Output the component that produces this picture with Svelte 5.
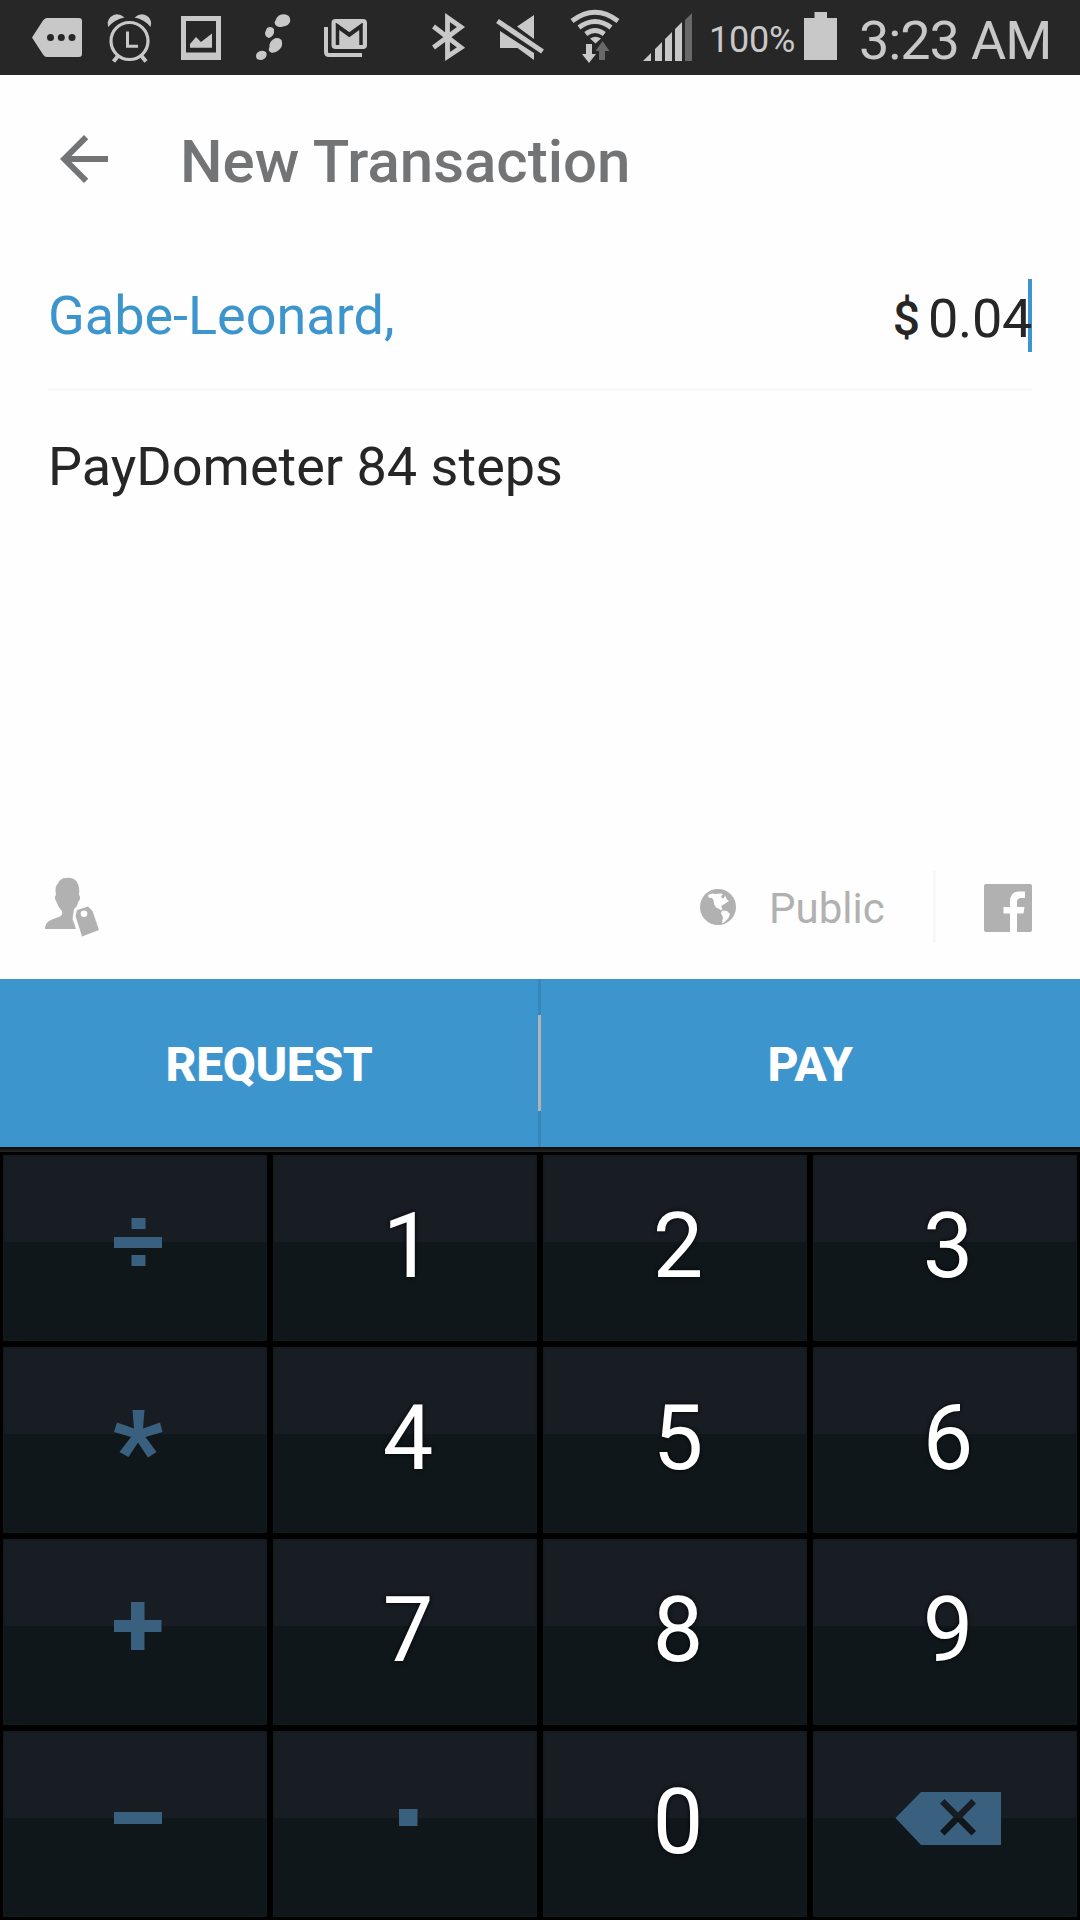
<script lang="ts">
	const recipient = 'Gabe-Leonard,';
	const note = 'PayDometer 84 steps';
	let amount = '0.04';

	const keys = ['÷', '1', '2', '3', '*', '4', '5', '6', '+', '7', '8', '9', '-', '.', '0', 'del'];
	const isDigit = (key: string) => key >= '0' && key <= '9';

	function press(key: string) {
		if (key === 'del') {
			amount = amount.slice(0, -1);
		} else if (isDigit(key) || (key === '.' && !amount.includes('.'))) {
			amount += key;
		}
	}
</script>

<div class="screen">
	<header class="status">
		<svg width="75" height="75" viewBox="20 0 75 75">
			<path d="M32 37.500L43 20.500Q44.500 18 47 18H79Q82 18 82 21V54Q82 57 79 57H47Q44.500 57 43 54.500Z" />
			<g class="hole"><circle cx="50.500" cy="37.500" r="3.500" /><circle cx="61.300" cy="37.500" r="3.500" /><circle cx="72" cy="37.500" r="3.500" /></g>
		</svg>
		<svg width="70" height="75" viewBox="95 0 70 75">
			<circle class="line" cx="129.500" cy="41" r="18.500" stroke-width="3.200" />
			<path class="line" d="M127.500 31.500V46.300H138" stroke-width="3" />
			<path class="line" d="M118 56L113.500 61.500M141.500 56L146 61.500" stroke-width="4" />
			<path d="M108.300 27Q106.500 21 110.500 17Q117 11.500 124.500 17.500Q114.500 19.500 108.300 27ZM150.500 27Q152.300 21 148.500 17Q142 11.500 134.500 17.500Q144.500 19.500 150.500 27Z" />
		</svg>
		<svg width="75" height="75" viewBox="165 0 75 75">
			<path fill-rule="evenodd" d="M181 16H221V60H181ZM186 21V52.500H216V21Z" />
			<path d="M190 44L196 37L201 42L212 33.500V47.700H190Z" />
		</svg>
		<svg width="70" height="75" viewBox="240 0 70 75">
			<path d="M280 15Q284 13.500 288 15.500Q291 18 290 22Q288 26 283 26.500Q279 28 276 25.500Q273.500 23 275.500 20.500Q277 16 280 15Z" />
			<path d="M267 28Q271 25.500 274 29V33Q272.500 37 269 38Q265 37 265 32.500Z" />
			<path d="M273 39.500Q278 36.500 281.500 40Q283.500 46 279 50Q275 53.500 271 52.500Q267.500 51 269.500 47Q269 42 273 39.500Z" />
			<path d="M257 53Q261 49 266 52Q268 56 264 59Q261 61 257 59Q255 56 257 53Z" />
		</svg>
		<svg width="105" height="75" viewBox="310 0 105 75">
			<path class="line" d="M326 27V52Q326 55 329 55H362" stroke-width="4" />
			<rect x="331.500" y="19" width="35.500" height="30" rx="4" />
			<path class="cut" d="M337.500 45V26.500L349.300 35L361 26.500V45" stroke-width="3.500" />
			<path class="cut" d="M336 23.500L349.300 33L362.500 23.500" stroke-width="1.500" />
		</svg>
		<svg width="65" height="75" viewBox="415 0 65 75">
			<path class="line" d="M433.500 26.500L461 47.500L447.500 56.500V17.500L461 27L433.500 47.500" stroke-width="4.800" />
		</svg>
		<svg width="75" height="75" viewBox="480 0 75 75">
			<path d="M517 26.500L534 15V39ZM500 31L534 53V60L517.500 48H500Z" />
			<path class="line" d="M497.500 21L542.500 51.500" stroke-width="5" />
		</svg>
		<svg width="75" height="75" viewBox="555 0 75 75">
			<path class="line" d="M572 21Q595 3.500 618 21M579 27.500Q595 15.500 611 27.500M585.800 34Q595 27 604.300 34" stroke-width="4.800" />
			<path d="M590 38.500Q595.500 35 601 38.500L595.500 43.500Z" />
			<path d="M586 44H592V54H596L589 63L582 54H586Z" />
			<path class="dim" d="M602.500 41L609.500 51H605V60H599V51H595.500Z" />
		</svg>
		<svg width="79" height="75" viewBox="630 0 79 75">
			<path d="M643 61L651 53V61ZM655 49L662 42V61H655ZM665 39L672 32V61H665ZM675 29L682 22V61H675Z" />
			<path class="dim" d="M685 20L692 13V61H685Z" />
		</svg>
		<span class="percent">100%</span>
		<svg width="42" height="75" viewBox="800 0 42 75"><path d="M814.500 12H827V18H837V60H804V18H814.500Z" /></svg>
		<span class="clock">3:23 AM</span>
	</header>

	<div class="toolbar">
		<svg class="back" width="72" height="72" viewBox="0 0 24 24">
			<path d="M20 11H7.830l5.590-5.590L12 4l-8 8 8 8 1.410-1.410L7.830 13H20v-2z" />
		</svg>
		<h1>New Transaction</h1>
	</div>

	<div class="form">
		<div class="who">
			<span class="recipient">{recipient}</span>
			<span class="amount"><b>$</b><span class="value">{amount}</span></span>
		</div>
		<p class="note">{note}</p>
		<div class="share">
			<svg class="tag" width="54" height="60" viewBox="45 876 54 60">
				<path d="M45 928Q45 921 52 918.500L60 915.500Q63 914 62 910Q58 906 56.500 901L55.500 899Q54 896 56 894Q54.500 885 58 882.500Q60 877 66 877Q73 876 77 881Q80 886 79 894Q81 896 79.500 899L78 901.500Q77.500 905 75.500 906.500L74 908L72.500 918L76 928Z" />
				<path fill-rule="evenodd" d="M77 909L88 905.500L92.500 910L99 929L82 935.500L75.500 915ZM84 909.500A3.300 3.300 0 1 0 84 916.100A3.300 3.300 0 1 0 84 909.500Z" />
			</svg>
			<svg class="globe" width="36" height="36" viewBox="0 0 36 36">
				<circle cx="18" cy="18" r="18" />
				<path class="land" d="M8 6L12 4.500L16 5L20 4.500L23 5L21 7.500L23 10L25 7L26 8L26.500 10L29 12L26 14L23 16L21 17.500L22.500 19.500L21 21.500L19.500 20L16 18.500L14 15L13.500 11L12 9L8.500 8.500Z" />
				<path class="land" d="M22 21.500L27 22L30 25L28.500 29L24 33.500L22 34.300L23 28L21 24.500Z" />
			</svg>
			<span class="public">Public</span>
			<svg class="facebook" width="48" height="48" viewBox="0 0 48 48">
				<rect width="48" height="48" rx="2" />
				<path class="land" d="M26 48V29.500H19.500V23H26V18Q26 7.500 35 7.500H41V14H37Q33 14 33 18V23H40.500L39.500 29.500H33V48Z" />
			</svg>
		</div>
	</div>

	<div class="actions">
		<button>REQUEST</button>
		<span class="split"></span>
		<button>PAY</button>
	</div>

	<div class="keypad">
		{#each keys as key}
			<button class="key" aria-label={key} on:click={() => press(key)}>
				{#if isDigit(key)}
					<span class="digit">{key}</span>
				{:else}
					<svg class="op" width="120" height="60" viewBox="-60 -30 120 60">
						{#if key === '÷'}
							<path d="M-6.500 -24H7.500V-13H-6.500ZM-24 -5H24V6H-24ZM-6.500 13H7.500V24H-6.500Z" />
						{:else if key === '*'}
							<path d="M-5.500 -24H6.500L5 -5.500L22 -11.500L24.500 -2L7.500 3L18.500 18L10 23.500L0 8.500L-9.500 23L-18.500 18L-7 3L-24 -2L-21 -11.500L-4 -5.500Z" />
						{:else if key === '+'}
							<path d="M-7 -24H6.500V-6H23.500V6H6.500V24H-7V6H-24V-6H-7Z" />
						{:else if key === '-'}
							<path d="M-24 -6H24V6H-24Z" />
						{:else if key === '.'}
							<path d="M-9 -9H9.500V8H-9Z" />
						{:else}
							<path fill-rule="evenodd" d="M-52.500 0L-27 -26H53V27H-27ZM-3.500 -19L-8 -14.500L5.500 -.8L-8 13L-3.500 17.500L10 4L23.500 17.500L28 13L14.500 -.8L28 -14.500L23.500 -19L10 -5.500Z" />
						{/if}
					</svg>
				{/if}
			</button>
		{/each}
	</div>
</div>

<style>
	:global(body) {
		margin: 0;
		background: #fefefe;
	}

	.screen {
		width: 1080px;
		height: 1920px;
		display: flex;
		flex-direction: column;
		overflow: hidden;
		background: #fefefe;
		font-family: Roboto, 'Liberation Sans', sans-serif;
		color: #262626;
	}

	svg {
		display: block;
		flex: none;
	}

	button {
		padding: 0;
		border: 0;
		font-family: inherit;
	}

	.status {
		height: 75px;
		flex: none;
		display: flex;
		padding-left: 20px;
		background: #272727;
		color: #c8c8c8;
		fill: #c8c8c8;
		white-space: nowrap;
	}

	.hole {
		fill: #272727;
	}

	.line {
		fill: none;
		stroke: #c8c8c8;
	}

	.cut {
		fill: none;
		stroke: #272727;
	}

	.dim {
		fill: #686868;
	}

	.percent {
		width: 91px;
		font-size: 36px;
		letter-spacing: -0.2px;
		line-height: 81px;
	}

	.clock {
		margin-left: 17px;
		font-size: 54px;
		letter-spacing: -1.1px;
		line-height: 82px;
	}

	.toolbar {
		height: 168px;
		flex: none;
		display: flex;
		align-items: center;
		padding-left: 48px;
		fill: #737476;
	}

	h1 {
		margin: 6px 0 0 60px;
		color: #737476;
		font-size: 60px;
		font-weight: 500;
		line-height: 70px;
	}

	.form {
		height: 736px;
		flex: none;
		display: flex;
		flex-direction: column;
		padding: 0 48px;
		box-sizing: border-box;
		font-size: 54px;
	}

	.who {
		height: 145px;
		display: flex;
		justify-content: space-between;
		border-bottom: 3px solid #f8f8f8;
	}

	.recipient {
		padding-top: 41px;
		line-height: 64px;
		color: #3d95ce;
	}

	.amount {
		display: flex;
		padding-top: 36px;
		height: 73px;
		line-height: 79px;
	}

	b {
		margin-right: 7px;
		font-size: 48px;
		font-weight: 500;
	}

	.value {
		margin-left: 1px;
		letter-spacing: -0.3px;
		background: linear-gradient(#3d95ce, #3d95ce) right / 4px 100% no-repeat;
	}

	.note {
		margin: 44px 0 0;
		line-height: 64px;
	}

	.share {
		margin-top: auto;
		height: 72px;
		padding-bottom: 36px;
		display: flex;
		align-items: center;
		color: #b1b1b1;
		fill: #b1b1b1;
	}

	.tag {
		margin: -1px 0 0 -3px;
	}

	.globe {
		margin: 0 33px 0 auto;
	}

	.land {
		fill: #fefefe;
	}

	.public {
		width: 164px;
		height: 72px;
		border-right: 3px solid #f8f8f8;
		font-size: 42px;
		line-height: 75px;
	}

	.facebook {
		margin: 2px 0 0 48px;
	}

	.actions {
		height: 168px;
		flex: none;
		display: flex;
		align-items: center;
		background: #3d95ce;
	}

	.actions button {
		width: 538px;
		height: 168px;
		padding-top: 3px;
		background: none;
		color: #fff;
		font-size: 48px;
		font-weight: 800;
		letter-spacing: -0.4px;
	}

	.split {
		width: 3px;
		height: 96px;
		background: #b3b3b3;
		border: solid #3787bb;
		border-width: 36px 0;
	}

	.keypad {
		flex: 1;
		display: grid;
		grid-template-columns: repeat(4, 264px);
		grid-template-rows: repeat(4, 186px);
		gap: 6px;
		padding: 8px 3px 3px;
		background: linear-gradient(#080808, #262626) top / 100% 5px no-repeat #000;
	}

	.key {
		display: flex;
		align-items: center;
		justify-content: center;
		padding-left: 6px;
		background: linear-gradient(#181c23 87px, #10171a 87px);
		box-shadow: inset 0 0 1px 1px #141a1b;
	}

	.digit {
		padding-bottom: 3px;
		color: #fff;
		font-size: 90px;
		line-height: 106px;
		text-shadow: 0 0 4px #000;
	}

	.op {
		margin-bottom: 12px;
		fill: #3a6080;
	}
</style>
